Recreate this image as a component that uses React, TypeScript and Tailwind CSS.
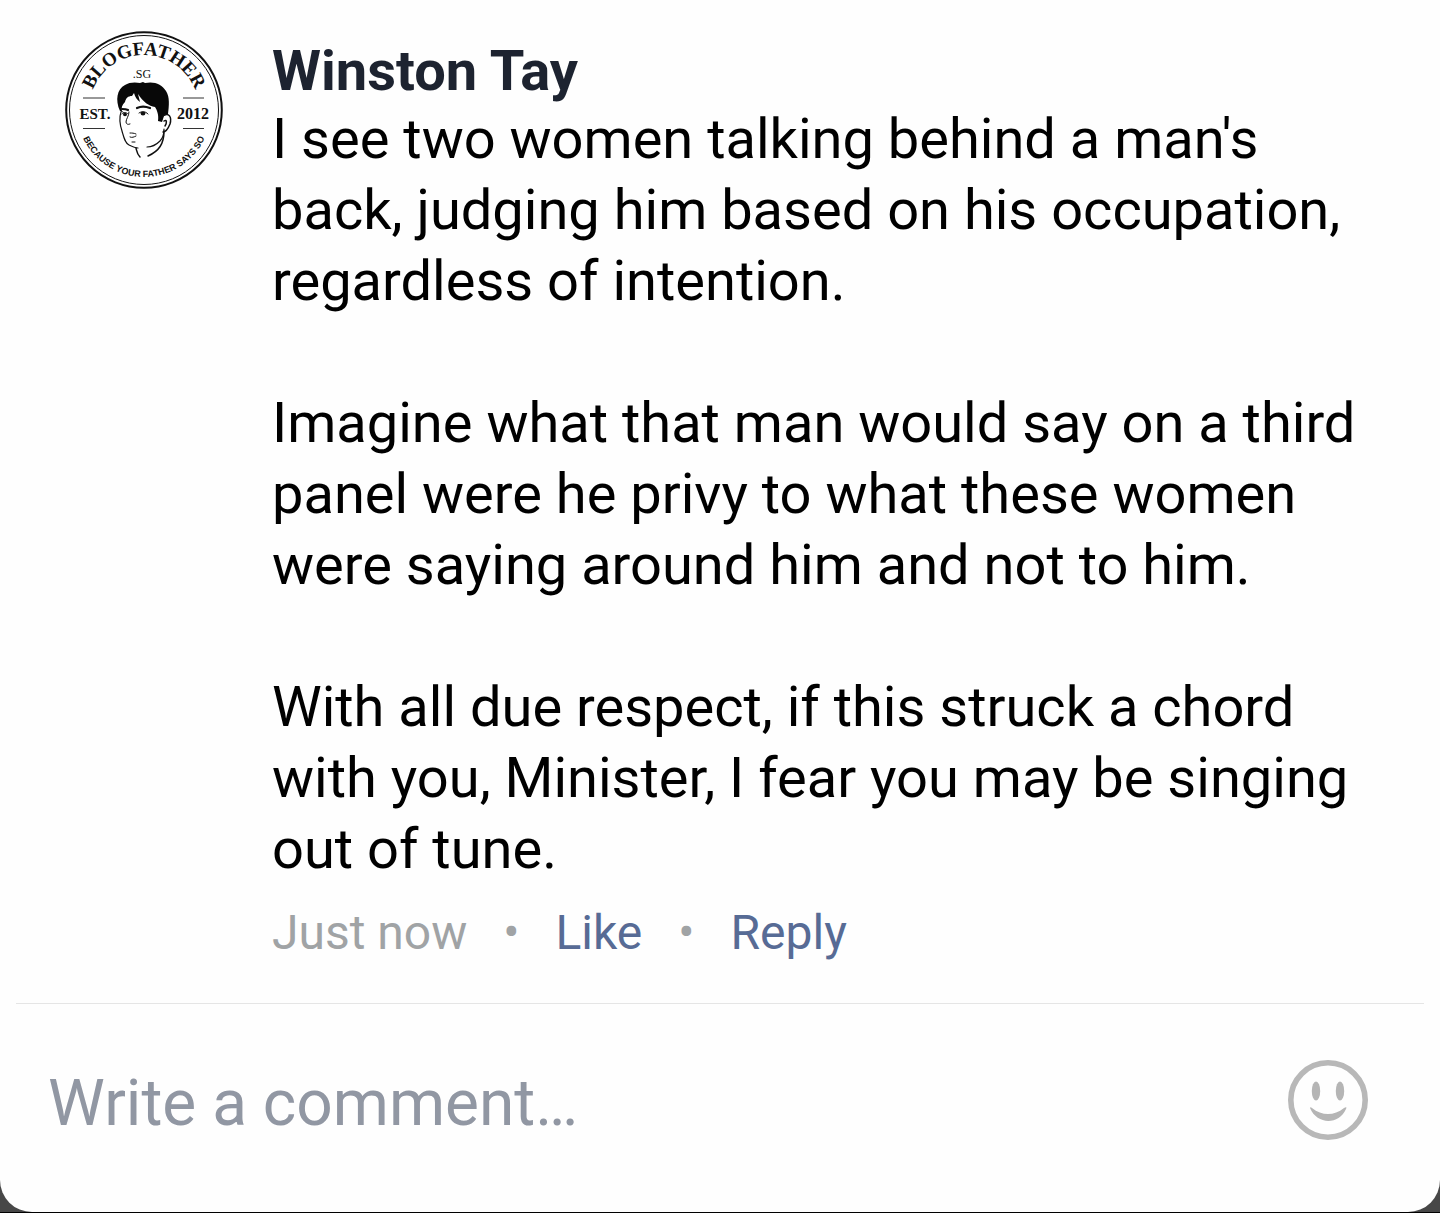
const paragraphs = [
  "I see two women talking behind a man's back, judging him based on his occupation, regardless of intention.",
  "Imagine what that man would say on a third panel were he privy to what these women were saying around him and not to him.",
  "With all due respect, if this struck a chord with you, Minister, I fear you may be singing out of tune.",
];

function Avatar() {
  return (
    <svg viewBox="0 0 160 160" className="size-40 shrink-0" role="img" aria-label="Blogfather.sg logo">
      <defs>
        <path id="arc-top" d="M25 80 A55 55 0 0 1 135 80" />
        <path id="arc-bottom" d="M13 80 A67 67 0 0 0 147 80" />
      </defs>
      <circle cx="80" cy="80" r="77.8" fill="#fff" stroke="#111" strokeWidth="2" />
      <circle cx="80" cy="80" r="74.5" fill="none" stroke="#111" strokeWidth="1" />
      <g fill="#111" textAnchor="middle">
        <text className="font-['Liberation_Serif',serif] text-[19px] font-bold">
          <textPath href="#arc-top" startOffset="50%">BLOGFATHER</textPath>
        </text>
        <text className="font-['Liberation_Sans_Narrow','Liberation_Sans',sans-serif] text-[9px] font-bold">
          <textPath href="#arc-bottom" startOffset="50%">BECAUSE YOUR FATHER SAYS SO</textPath>
        </text>
        <text x="78" y="48" className="font-['Liberation_Serif',serif] text-[12px]">.SG</text>
        <text x="31" y="89" className="font-['Liberation_Serif',serif] text-[15px] font-bold">EST.</text>
        <text x="129" y="89" className="font-['Liberation_Serif',serif] text-[16px] font-bold">2012</text>
      </g>
      <path d="M19 68h22M19 98.500h22M119 68h21M119 98.500h21" stroke="#333" strokeWidth="1" />
      <path
        d="M56 81C51 70 53 59 61 55c4-3 11-3 15-2l3-1 2 1c9-2 17 1 21 8 4 6 3 15 2 23l-4 2-2 6-4-1c1-6-1-11-3-14-6-1-12-5-17-13l2 8c-3-2-5-5-6-9l-2 3c-4 0-6 2-7 6-3 3-4 6-3 9l4 3z"
        fill="#080808"
      />
      <g fill="none" stroke="#111" strokeLinecap="round" strokeLinejoin="round">
        <path strokeWidth="1.200" d="M57 82c-2 6-1 13 1 19 2 7 3 12 7 14 4 2 7 3 9 3M100 99c0 5-1 9-4 12-4 4-8 6-13 6" />
        <path strokeWidth="1.500" d="M99 86c6-4 9 1 7 8-2 5-4 8-7 8M100 91c3-2 3 2 1 5M100 101c0 13-5 20-16 25M72 118c1 4 1 6 4 9" />
        <path strokeWidth="2.200" d="M58 79c2 0 4 0 6 1M73 78c4-2 8-2 13 0" />
        <path strokeWidth="1" d="M58 84c2-2 4-2 6 0M75 83c3-2 6-2 9 1M65 82c0 4-3 7-3 10 0 2 2 3 4 2M66 103c2 0 4 0 6 1M66 107c2 1 4 0 6-1M68 112h3" />
      </g>
      <ellipse cx="61" cy="84.500" rx="2" ry="1.800" fill="#111" />
      <ellipse cx="79" cy="83.500" rx="2.400" ry="1.900" fill="#111" />
    </svg>
  );
}

function Smiley() {
  return (
    <svg viewBox="0 0 80 80" className="size-20" aria-hidden="true">
      <circle cx="40" cy="40" r="37.200" fill="none" stroke="#b8b8b8" strokeWidth="5.600" />
      <ellipse cx="28" cy="31" rx="4.200" ry="9.500" fill="#b5b5b5" />
      <ellipse cx="52" cy="31" rx="4.200" ry="9.500" fill="#b5b5b5" />
      <path d="M22 48c0-1 1-1 2 0 10 8 22 8 32 0 2-1 3-1 2 1-7 16-29 16-36-1z" fill="#b5b5b5" />
    </svg>
  );
}

export default function App() {
  return (
    <div className="border-b border-black bg-[#474747] font-[Roboto,sans-serif]">
      <main className="rounded-b-[32px] bg-[#fefefe]">
        <article className="flex items-start pt-[30px] pr-16 pb-[42px] pl-16">
          <Avatar />
          <div className="ml-12 min-w-0 flex-1 pt-2">
            <h2 className="text-[56px] leading-[66px] font-bold text-[#1d2330]">Winston Tay</h2>
            <div className="space-y-[71px] text-[56px] leading-[71px] text-black">
              {paragraphs.map((text) => (
                <p key={text}>{text}</p>
              ))}
            </div>
            <div className="mt-5 flex gap-9 text-[48px] leading-[56px] text-[#a0a3a5]">
              <span>Just now</span>
              <span aria-hidden="true">•</span>
              <button type="button" className="text-[#576b95]">Like</button>
              <span aria-hidden="true">•</span>
              <button type="button" className="text-[#576b95]">Reply</button>
            </div>
          </div>
        </article>
        <form className="mx-4 flex items-start border-t border-[#e5e5e5] pt-14 pr-14 pb-16 pl-8" onSubmit={(e) => e.preventDefault()}>
          <input
            type="text"
            aria-label="Write a comment"
            placeholder="Write a comment…"
            className="h-[88px] min-w-0 flex-1 bg-transparent text-[64px] text-[#1d2330] outline-none placeholder:text-[#9197a3]"
          />
          <button type="button" aria-label="Insert emoji">
            <Smiley />
          </button>
        </form>
      </main>
    </div>
  );
}
